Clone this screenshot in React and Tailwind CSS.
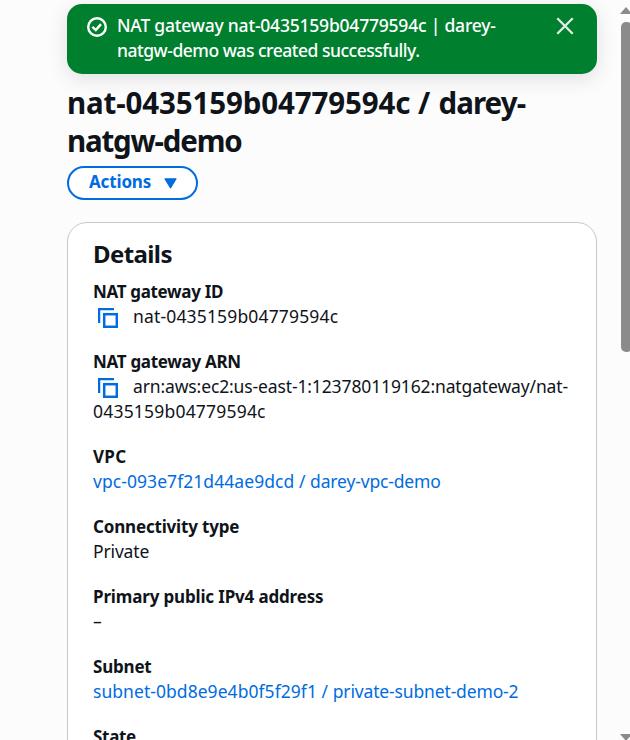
function CopyIcon() {
  return (
    <svg className="mr-[15px] ml-[5px] inline-block h-5 w-5 align-[-5px]" viewBox="0 0 20 20" fill="none" stroke="#006ce0">
      <path d="M1.1 15V1.1H16" strokeWidth="2.3" />
      <rect x="6.2" y="6.2" width="12.6" height="12.6" strokeWidth="2.5" />
    </svg>
  );
}

function Field({ label, labelClass, children }) {
  return (
    <div>
      <dt className={`text-[17px] leading-[25px] font-bold ${labelClass}`}>{label}</dt>
      <dd>{children}</dd>
    </div>
  );
}

function Banner() {
  return (
    <div className="flex h-[70px] shrink-0 items-start rounded-[15px] bg-[#00802f] pt-[9px] pr-[22px] pl-5 text-white shadow-[0_5px_20px_1px_rgba(0,7,22,0.1)]">
      <svg className="mt-1 h-5 w-5 shrink-0" viewBox="0 0 20 20" fill="none" stroke="currentColor" strokeWidth="2.4">
        <circle cx="10" cy="10" r="8.8" />
        <path d="M5.4 9.9L8.8 13.1L14 7.1" />
      </svg>
      <p className="ml-[10px] flex-1 whitespace-nowrap font-medium">
        <span className="tracking-[-0.21px]">NAT gateway nat-0435159b04779594c | darey-</span>
        <br />
        <span className="tracking-[-0.48px]">natgw-demo was created successfully.</span>
      </p>
      <button className="mt-[3px] h-5 w-5" aria-label="Dismiss">
        <svg className="h-5 w-5" viewBox="0 0 20 20" fill="none" stroke="#e2efe6" strokeWidth="2.3">
          <path d="M2.3 2.3L17.7 17.7M17.7 2.3L2.3 17.7" />
        </svg>
      </button>
    </div>
  );
}

function Scrollbar() {
  return (
    <div className="flex h-full w-[10px] shrink-0 flex-col overflow-hidden">
      <svg className="mt-[7px] h-[7px] w-3 shrink-0" viewBox="0 0 12 7" fill="#8b8b8b">
        <path d="M0 7L6 0L12 7Z" />
      </svg>
      <div className="mt-2 ml-px h-[330px] w-[11px] shrink-0 rounded-[5px] bg-[#8b8b8b]" />
      <svg className="mt-auto h-[6px] w-3 shrink-0" viewBox="0 0 12 6" fill="#8b8b8b">
        <path d="M0 0H12L6 7Z" />
      </svg>
    </div>
  );
}

export default function App() {
  return (
    <div className="flex h-[740px] w-[630px] overflow-hidden bg-[#fcfcfd] font-['Noto_Sans',sans-serif] text-[17.5px] leading-[25px] text-[#0f141a]">
      <main className="ml-[67px] flex h-full w-[530px] shrink-0 flex-col pt-1">
        <Banner />
        <h1 className="mt-[10px] whitespace-nowrap text-[29.5px] leading-[37.5px] font-bold">
          <span className="tracking-[-0.13px]">nat-0435159b04779594c </span>
          <span className="tracking-[0.3px]">/ </span>
          <span className="tracking-[-0.9px]">darey-</span>
          <br />
          <span className="tracking-[-1.2px]">natgw-demo</span>
        </h1>
        <button className="mt-[7px] flex h-[34px] w-[131px] shrink-0 items-center rounded-full border-2 border-[#006ce0] bg-white pl-5 text-[17px] font-bold tracking-[-0.15px] text-[#006ce0]">
          <span className="-mt-[3px] w-[75px] text-left">Actions</span>
          <svg className="mt-px h-[11px] w-[13px]" viewBox="0 0 13 11" fill="currentColor" stroke="currentColor" strokeLinejoin="round">
            <path d="M.8 .8H12.2L6.5 10.2Z" />
          </svg>
        </button>
        <section className="mt-[22px] h-[540px] shrink-0 rounded-[20px] border border-[#c6c6cd] bg-white px-[25px] pt-4">
          <h2 className="text-[24px] leading-[30px] font-bold tracking-[-0.6px]">Details</h2>
          <dl className="mt-[10px] flex flex-col gap-5 whitespace-nowrap">
            <Field label="NAT gateway ID" labelClass="tracking-[-0.33px]">
              <CopyIcon />
              <span className="tracking-[0.16px]">nat-0435159b04779594c</span>
            </Field>
            <Field label="NAT gateway ARN" labelClass="tracking-[-0.3px]">
              <CopyIcon />
              <span className="tracking-[-0.13px]">arn:aws:ec2:us-east-1:123780119162:natgateway/nat-</span>
              <br />
              <span className="tracking-[0.2px]">0435159b04779594c</span>
            </Field>
            <Field label="VPC" labelClass="tracking-[0.3px]">
              <a className="text-[#006ce0]">
                <span className="tracking-[0.06px]">vpc-093e7f21d44ae9dcd / </span>
                <span className="tracking-[-0.16px]">darey-vpc-demo</span>
              </a>
            </Field>
            <Field label="Connectivity type" labelClass="tracking-[-0.18px]">
              <span className="tracking-[-0.15px]">Private</span>
            </Field>
            <Field label="Primary public IPv4 address" labelClass="tracking-[-0.16px]">
              <span>–</span>
            </Field>
            <Field label="Subnet" labelClass="tracking-[-0.2px]">
              <a className="text-[#006ce0]">
                <span className="tracking-[0.05px]">subnet-0bd8e9e4b0f5f29f1 / </span>
                <span className="tracking-[-0.15px]">private-subnet-demo-2</span>
              </a>
            </Field>
            <Field label="State" labelClass="tracking-[-0.3px]" />
          </dl>
        </section>
      </main>
      <div className="w-[23px] shrink-0" />
      <Scrollbar />
    </div>
  );
}
